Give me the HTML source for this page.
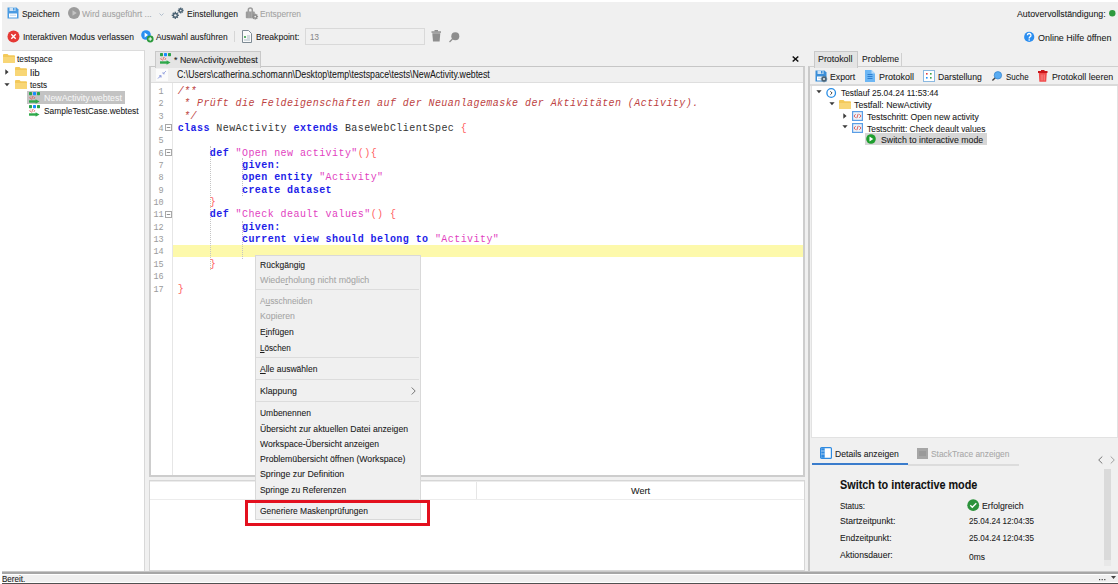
<!DOCTYPE html>
<html><head><meta charset="utf-8">
<style>
html,body{margin:0;padding:0;}
body{width:1118px;height:584px;position:relative;overflow:hidden;background:#f0f0f0;font-family:"Liberation Sans",sans-serif;}
.a{position:absolute;}
.t{position:absolute;white-space:nowrap;line-height:normal;transform-origin:0 0;-webkit-text-stroke:0.08px currentColor;font-family:"Liberation Sans",sans-serif;}
.code{position:absolute;left:177.7px;white-space:pre;font-family:"Liberation Mono",monospace;font-size:10px;letter-spacing:0.43px;line-height:12.36px;color:#333;}
.ln{position:absolute;left:143px;width:20.7px;text-align:right;white-space:pre;font-family:"Liberation Mono",monospace;font-size:8.5px;line-height:12.36px;color:#9a9a9a;}
.k{color:#1e1ee8;font-weight:bold;}
.s{color:#e23fbf;}
.c{color:#bd4242;font-style:italic;}
.p{color:#ff6262;}
svg{position:absolute;overflow:visible;}
</style></head><body>
<!-- white strips -->
<div class="a" style="left:0;top:0;width:1118px;height:2px;background:#fff"></div>
<div class="a" style="left:0;top:0;width:2px;height:584px;background:#fff"></div>

<!-- left panel -->
<div class="a" style="left:2px;top:50px;width:142px;height:520px;background:#fff;border-top:1px solid #dcdcdc;border-right:1px solid #d8d8d8"></div>
<div class="a" style="left:27px;top:91px;width:98px;height:13px;background:#c3c3c3"></div>

<!-- editor panel -->
<div class="a" style="left:149px;top:66px;width:652px;height:408px;background:#fff;border:1px solid #c6c6c6;border-left:2px solid #cdcdcd;border-right:2px solid #cdcdcd;border-bottom:2px solid #cdcdcd"></div>
<div class="a" style="left:151px;top:67px;width:652px;height:15px;background:#f0f0f0;border-bottom:1px solid #dedede"></div>
<div class="a" style="left:172px;top:83px;width:1px;height:392px;background:#e6e6e6"></div>
<!-- current line highlight -->
<div class="a" style="left:173px;top:245px;width:630px;height:12px;background:#fdf9ab"></div>
<!-- indent guides -->
<div class="a" style="left:210px;top:146px;width:0;height:124px;border-left:1px dotted #c4c4c4"></div>
<div class="a" style="left:242px;top:158px;width:0;height:38px;border-left:1px dotted #c4c4c4"></div>
<div class="a" style="left:242px;top:221px;width:0;height:38px;border-left:1px dotted #c4c4c4"></div>

<!-- editor tab -->
<div class="a" style="left:155px;top:51px;width:104px;height:16px;background:#e4e4e4;border:1px solid #c9c9c9;border-bottom:none"></div>
<!-- lower table panel -->
<div class="a" style="left:149px;top:480px;width:654px;height:89px;background:#fff;border:1px solid #d6d6d6"></div>
<div class="a" style="left:150px;top:499px;width:654px;height:1px;background:#ececec"></div>
<div class="a" style="left:476px;top:481px;width:1px;height:18px;background:#e6e6e6"></div><div class="a" style="left:150px;top:481px;width:654px;height:1px;background:#ececec"></div>

<!-- right panel -->
<div class="a" style="left:901px;top:53px;width:1px;height:13px;background:#d0d0d0"></div>
<div class="a" style="left:808px;top:66px;width:310px;height:505px;background:#f0f0f0;border-top:1px solid #cfcfcf;border-left:2px solid #c9c9c9"></div>
<div class="a" style="left:814px;top:51px;width:42px;height:16px;background:#e4e4e4;border:1px solid #c9c9c9;border-bottom:none"></div>
<div class="a" style="left:810px;top:84px;width:308px;height:2px;background:#dadada"></div>
<div class="a" style="left:811px;top:86px;width:305px;height:351px;background:#fff;border:1px solid #e2e2e2;border-top:none"></div>
<div class="a" style="left:865px;top:133px;width:122px;height:12px;background:#d6d6d6"></div>
<!-- details tabs underline -->
<div class="a" style="left:908px;top:464px;width:111px;height:2px;background:#dcdcdc"></div>
<div class="a" style="left:812px;top:463px;width:96px;height:2px;background:#3a7ccc"></div>
<!-- scrollbar -->
<div class="a" style="left:1104px;top:469px;width:7px;height:91px;background:#dadada"></div>
<div class="a" style="left:1104px;top:560px;width:7px;height:6px;background:#e8e8e8"></div>

<!-- status bar -->
<div class="a" style="left:2px;top:571px;width:1116px;height:1px;background:#c8c8c8"></div>
<div class="a" style="left:2px;top:572px;width:1116px;height:2px;background:#a6a6a6"></div>
<div class="a" style="left:2px;top:574px;width:1116px;height:1px;background:#fff"></div>
<div class="a" style="left:2px;top:582px;width:1116px;height:1px;background:#fff"></div>
<div class="a" style="left:2px;top:583px;width:1116px;height:1px;background:#505050"></div>

<!-- context menu -->
<div class="a" style="left:255px;top:255px;width:164px;height:263px;background:#f0f0f0;border:1px solid #d9d9d9"></div>
<div class="a" style="left:256px;top:289px;width:163px;height:1px;background:#dcdcdc"></div>
<div class="a" style="left:256px;top:357px;width:163px;height:1px;background:#dcdcdc"></div>
<div class="a" style="left:256px;top:379px;width:163px;height:1px;background:#dcdcdc"></div>
<div class="a" style="left:256px;top:401px;width:163px;height:1px;background:#dcdcdc"></div>
<div class="a" style="left:256px;top:499px;width:163px;height:1px;background:#dcdcdc"></div>
<!-- red highlight rectangle -->
<div class="a" style="left:245px;top:500px;width:179px;height:20px;border:3px solid #e3101e"></div>

<div class="ln" style="top:85.80px">1</div>
<div class="code" style="top:85.80px"><span class=c>/**</span></div>
<div class="ln" style="top:98.16px">2</div>
<div class="code" style="top:98.16px"><span class=c> * Prüft die Feldeigenschaften auf der Neuanlagemaske der Aktivitäten (Activity).</span></div>
<div class="ln" style="top:110.52px">3</div>
<div class="code" style="top:110.52px"><span class=c> */</span></div>
<div class="ln" style="top:122.88px">4</div>
<div class="code" style="top:122.88px"><span class=k>class</span> NewActivity <span class=k>extends</span> BaseWebClientSpec <span class=p>{</span></div>
<div class="ln" style="top:135.24px">5</div>
<div class="ln" style="top:147.60px">6</div>
<div class="code" style="top:147.60px">     <span class=k>def</span> <span class=s>"Open new activity"</span><span class=p>(){</span></div>
<div class="ln" style="top:159.96px">7</div>
<div class="code" style="top:159.96px">          <span class=k>given:</span></div>
<div class="ln" style="top:172.32px">8</div>
<div class="code" style="top:172.32px">          <span class=k>open entity</span> <span class=s>"Activity"</span></div>
<div class="ln" style="top:184.68px">9</div>
<div class="code" style="top:184.68px">          <span class=k>create dataset</span></div>
<div class="ln" style="top:197.04px">10</div>
<div class="code" style="top:197.04px">     <span class=p>}</span></div>
<div class="ln" style="top:209.40px">11</div>
<div class="code" style="top:209.40px">     <span class=k>def</span> <span class=s>"Check deault values"</span><span class=p>() {</span></div>
<div class="ln" style="top:221.76px">12</div>
<div class="code" style="top:221.76px">          <span class=k>given:</span></div>
<div class="ln" style="top:234.12px">13</div>
<div class="code" style="top:234.12px">          <span class=k>current view should belong to</span> <span class=s>"Activity"</span></div>
<div class="ln" style="top:246.48px">14</div>
<div class="ln" style="top:258.84px">15</div>
<div class="code" style="top:258.84px">     <span class=p>}</span></div>
<div class="ln" style="top:271.20px">16</div>
<div class="ln" style="top:283.56px">17</div>
<div class="code" style="top:283.56px"><span class=p>}</span></div>
<svg style="left:7px;top:7px" width="12" height="12" viewBox="0 0 12 12"><path d="M0.5 0.5h9l2 2v9h-11z" fill="#4a9be2"/><rect x="2.5" y="0.5" width="6" height="3.5" fill="#cfe3f5"/><rect x="6" y="1" width="1.5" height="2.5" fill="#4a9be2"/><rect x="2" y="6.5" width="8" height="4" fill="#ffffff"/><rect x="3" y="7.8" width="6" height="0.8" fill="#b0cde8"/></svg>
<svg style="left:68px;top:7px" width="12" height="12" viewBox="0 0 12 12"><circle cx="6" cy="6" r="6" fill="#9c9c9c"/><path d="M4.5 3.3l4.2 2.7l-4.2 2.7z" fill="#c4c4c4"/></svg>
<svg style="left:159px;top:13px" width="5" height="3" viewBox="0 0 5 3"><path d="M0.5 0.5l2 2l2-2" stroke="#a8b8c8" fill="none" stroke-width="0.9"/></svg>
<svg style="left:171px;top:6px" width="14" height="14" viewBox="0 0 14 14"><rect x="3.5999999999999996" y="5.700000000000001" width="1.4" height="7.2" fill="#4d6475" transform="rotate(0.0 4.3 9.3)"/><rect x="3.5999999999999996" y="5.700000000000001" width="1.4" height="7.2" fill="#4d6475" transform="rotate(45.0 4.3 9.3)"/><rect x="3.5999999999999996" y="5.700000000000001" width="1.4" height="7.2" fill="#4d6475" transform="rotate(90.0 4.3 9.3)"/><rect x="3.5999999999999996" y="5.700000000000001" width="1.4" height="7.2" fill="#4d6475" transform="rotate(135.0 4.3 9.3)"/><circle cx="4.3" cy="9.3" r="2.6" fill="#4d6475"/><circle cx="4.3" cy="9.3" r="1.1700000000000002" fill="#f0f0f0"/><rect x="9.0" y="1.6" width="1.4" height="5.8" fill="#4d6475" transform="rotate(0.0 9.7 4.5)"/><rect x="9.0" y="1.6" width="1.4" height="5.8" fill="#4d6475" transform="rotate(45.0 9.7 4.5)"/><rect x="9.0" y="1.6" width="1.4" height="5.8" fill="#4d6475" transform="rotate(90.0 9.7 4.5)"/><rect x="9.0" y="1.6" width="1.4" height="5.8" fill="#4d6475" transform="rotate(135.0 9.7 4.5)"/><circle cx="9.7" cy="4.5" r="1.9" fill="#4d6475"/><circle cx="9.7" cy="4.5" r="0.855" fill="#f0f0f0"/></svg>
<svg style="left:245px;top:7px" width="13" height="12" viewBox="0 0 13 12"><path d="M3.3 5v-2a2 2 0 0 1 4 0v2" stroke="#9c9c9c" stroke-width="1.5" fill="none"/><rect x="0.8" y="4.6" width="9" height="6.6" rx="0.8" fill="#9c9c9c"/><path d="M4 4.6v6.6M6.6 4.6v6.6" stroke="#b4b4b4" stroke-width="0.6"/><rect x="9.5" y="6.699999999999999" width="1.4" height="5.8" fill="#8e8e8e" transform="rotate(0.0 10.2 9.6)"/><rect x="9.5" y="6.699999999999999" width="1.4" height="5.8" fill="#8e8e8e" transform="rotate(45.0 10.2 9.6)"/><rect x="9.5" y="6.699999999999999" width="1.4" height="5.8" fill="#8e8e8e" transform="rotate(90.0 10.2 9.6)"/><rect x="9.5" y="6.699999999999999" width="1.4" height="5.8" fill="#8e8e8e" transform="rotate(135.0 10.2 9.6)"/><circle cx="10.2" cy="9.6" r="1.9" fill="#8e8e8e"/><circle cx="10.2" cy="9.6" r="0.855" fill="#f0f0f0"/></svg>
<svg style="left:7px;top:30px" width="13" height="13" viewBox="0 0 13 13"><circle cx="6.5" cy="6.5" r="6" fill="#e53935"/><path d="M4.3 4.3l4.4 4.4M8.7 4.3l-4.4 4.4" stroke="#fff" stroke-width="1.4"/></svg>
<svg style="left:141px;top:30px" width="13" height="13" viewBox="0 0 13 13"><circle cx="5" cy="5" r="4.8" fill="#2a8ef0"/><path d="M3.6 2.6l3.4 2.4l-3.4 2.4z" fill="#fff"/><circle cx="9.2" cy="9" r="3.4" fill="#2c9a3c"/><path d="M9.2 7.2v3.6M7.4 9h3.6" stroke="#fff" stroke-width="1"/></svg>
<div class="a" style="left:234px;top:31px;width:1px;height:11px;background:#d6d6d6"></div>
<svg style="left:242px;top:30px" width="10" height="13" viewBox="0 0 10 13"><path d="M0.5 0.5h6l3 3v9h-9z" fill="#fafafa" stroke="#7d8a94"/><circle cx="3" cy="7" r="1.1" fill="#3aa04a"/><path d="M5 6h3M5 8h3M2 10h6" stroke="#8aa0b0" stroke-width="0.7"/></svg>
<div class="a" style="left:305px;top:28px;width:118px;height:15px;background:#f0f0f0;border:1px solid #d9d9d9"></div>
<svg style="left:431px;top:30px" width="11" height="12" viewBox="0 0 11 12"><rect x="0.5" y="1.3" width="9.5" height="1.5" fill="#8e8e8e"/><rect x="3.5" y="0" width="3.5" height="1.5" fill="#8e8e8e"/><path d="M1.3 3.3h8l-0.7 8.2h-6.6z" fill="#8e8e8e"/></svg>
<svg style="left:449px;top:32px" width="11" height="11" viewBox="0 0 11 11"><circle cx="6.3" cy="4.3" r="4" fill="#8e8e8e"/><path d="M3.5 7l-3 3" stroke="#8e8e8e" stroke-width="1.3"/></svg>
<svg style="left:1109px;top:10px" width="7" height="7" viewBox="0 0 7 7"><circle cx="3.3" cy="3.3" r="3.2" fill="#2e9a3e"/></svg>
<svg style="left:1024px;top:31px" width="11" height="12" viewBox="0 0 11 12"><circle cx="5.2" cy="5.9" r="5.1" fill="#2b8ef0"/><path d="M3.4 4.3a1.8 1.8 0 1 1 2.6 1.6q-0.8 0.4-0.8 1.3v0.4" stroke="#fff" stroke-width="1.3" fill="none"/><rect x="4.5" y="8.3" width="1.4" height="1.3" fill="#fff"/></svg>
<svg style="left:3px;top:54px" width="12" height="9" viewBox="0 0 12 9"><path d="M0 1q0-1 1-1h3.5l1.2 1.3h5.3q1 0 1 1v5.7q0 1-1 1h-10q-1 0-1-1z" fill="#f3c95a"/><path d="M0 3h12v5q0 1-1 1h-10q-1 0-1-1z" fill="#f8d676"/></svg>
<svg style="left:5px;top:69px" width="4" height="6" viewBox="0 0 4 6"><path d="M0.3 0.3l3.3 2.7l-3.3 2.7z" fill="#3a3a3a"/></svg>
<svg style="left:15px;top:67px" width="12" height="9" viewBox="0 0 12 9"><path d="M0 1q0-1 1-1h3.5l1.2 1.3h5.3q1 0 1 1v5.7q0 1-1 1h-10q-1 0-1-1z" fill="#f3c95a"/><path d="M0 3h12v5q0 1-1 1h-10q-1 0-1-1z" fill="#f8d676"/></svg>
<svg style="left:4px;top:83px" width="6" height="4" viewBox="0 0 6 4"><path d="M0.4 0.3h5.2l-2.6 3z" fill="#3a3a3a"/></svg>
<svg style="left:15px;top:80px" width="12" height="9" viewBox="0 0 12 9"><path d="M0 1q0-1 1-1h3.5l1.2 1.3h5.3q1 0 1 1v5.7q0 1-1 1h-10q-1 0-1-1z" fill="#f3c95a"/><path d="M0 3h12v5q0 1-1 1h-10q-1 0-1-1z" fill="#f8d676"/></svg>
<svg style="left:29px;top:92px" width="12" height="12" viewBox="0 0 12 12"><rect x="0" y="0" width="3" height="3.2" rx="0.6" fill="#2ba34a"/><rect x="4" y="0" width="3" height="3.2" rx="0.6" fill="#168cff"/><rect x="8" y="0" width="3" height="3.2" rx="0.6" fill="#2ba34a"/><path d="M1.8 4.6l-1.2 1.2l1.2 1.2M4.6 4.6l1.2 1.2l-1.2 1.2M3.8 4.1l-1.2 3.6" stroke="#de5a5a" stroke-width="0.8" fill="none"/><path d="M0 9.5h7.3" stroke="#2ea84a" stroke-width="2.4"/><path d="M6.6 7.3l3.9 2.2l-3.9 2.2z" fill="#2ea84a"/></svg>
<svg style="left:29px;top:105px" width="12" height="12" viewBox="0 0 12 12"><rect x="0" y="0" width="3" height="3.2" rx="0.6" fill="#2ba34a"/><rect x="4" y="0" width="3" height="3.2" rx="0.6" fill="#168cff"/><rect x="8" y="0" width="3" height="3.2" rx="0.6" fill="#2ba34a"/><path d="M1.8 4.6l-1.2 1.2l1.2 1.2M4.6 4.6l1.2 1.2l-1.2 1.2M3.8 4.1l-1.2 3.6" stroke="#de5a5a" stroke-width="0.8" fill="none"/><path d="M0 9.5h7.3" stroke="#2ea84a" stroke-width="2.4"/><path d="M6.6 7.3l3.9 2.2l-3.9 2.2z" fill="#2ea84a"/></svg>
<svg style="left:160px;top:53px" width="12" height="12" viewBox="0 0 12 12"><rect x="0" y="0" width="3" height="3.2" rx="0.6" fill="#2ba34a"/><rect x="4" y="0" width="3" height="3.2" rx="0.6" fill="#168cff"/><rect x="8" y="0" width="3" height="3.2" rx="0.6" fill="#2ba34a"/><path d="M1.8 4.6l-1.2 1.2l1.2 1.2M4.6 4.6l1.2 1.2l-1.2 1.2M3.8 4.1l-1.2 3.6" stroke="#de5a5a" stroke-width="0.8" fill="none"/><path d="M0 9.5h7.3" stroke="#2ea84a" stroke-width="2.4"/><path d="M6.6 7.3l3.9 2.2l-3.9 2.2z" fill="#2ea84a"/></svg>
<svg style="left:156px;top:69px" width="12" height="12" viewBox="0 0 12 12"><rect x="0" y="0" width="12" height="12" fill="#fbfbfb"/><path d="M2 9.5l3-3M3.2 6.8h1.8v1.8" stroke="#7b8ad8" stroke-width="0.9" fill="none"/><path d="M10 2l-3 3M8.8 4.8h-1.8v-1.8" stroke="#9aa6e0" stroke-width="0.9" fill="none"/></svg>
<svg style="left:792px;top:56px" width="7" height="6" viewBox="0 0 7 6"><path d="M0.7 0.5l5.6 5M6.3 0.5l-5.6 5" stroke="#111" stroke-width="1.5"/></svg>
<svg style="left:165px;top:124px" width="7" height="7" viewBox="0 0 7 7"><rect x="0.5" y="0.5" width="6" height="6" fill="#fff" stroke="#a8a8a8"/><path d="M1.8 3.5h3.4" stroke="#777" stroke-width="0.8"/></svg>
<svg style="left:165px;top:149px" width="7" height="7" viewBox="0 0 7 7"><rect x="0.5" y="0.5" width="6" height="6" fill="#fff" stroke="#a8a8a8"/><path d="M1.8 3.5h3.4" stroke="#777" stroke-width="0.8"/></svg>
<svg style="left:165px;top:211px" width="7" height="7" viewBox="0 0 7 7"><rect x="0.5" y="0.5" width="6" height="6" fill="#fff" stroke="#a8a8a8"/><path d="M1.8 3.5h3.4" stroke="#777" stroke-width="0.8"/></svg>
<svg style="left:815px;top:70px" width="12" height="12" viewBox="0 0 12 12"><path d="M0.5 0.5h9l2 2v9h-11z" fill="#3a8ed8"/><rect x="2.5" y="0.5" width="6" height="3.5" fill="#cfe3f5"/><rect x="6" y="1" width="1.5" height="2.5" fill="#3a8ed8"/><rect x="2" y="6.5" width="8" height="4" fill="#ffffff"/><rect x="3" y="7.8" width="6" height="0.8" fill="#b0cde8"/></svg><svg style="left:821px;top:76px" width="6" height="6" viewBox="0 0 6 6"><rect x="2.3" y="-0.20000000000000018" width="1.4" height="6.4" fill="#4d6475" transform="rotate(0.0 3 3)"/><rect x="2.3" y="-0.20000000000000018" width="1.4" height="6.4" fill="#4d6475" transform="rotate(45.0 3 3)"/><rect x="2.3" y="-0.20000000000000018" width="1.4" height="6.4" fill="#4d6475" transform="rotate(90.0 3 3)"/><rect x="2.3" y="-0.20000000000000018" width="1.4" height="6.4" fill="#4d6475" transform="rotate(135.0 3 3)"/><circle cx="3" cy="3" r="2.2" fill="#4d6475"/><circle cx="3" cy="3" r="0.9900000000000001" fill="#f0f0f0"/></svg>
<svg style="left:865px;top:70px" width="10" height="12" viewBox="0 0 10 12"><path d="M0 0h6.5l3.5 3.5v8.5h-10z" fill="#6cb6f4"/><path d="M6.5 0v3.5h3.5z" fill="#b8dcfa"/><path d="M2.5 4.5h5M2.5 6.5h5M2.5 8.5h5" stroke="#2f7fd0" stroke-width="1"/></svg>
<svg style="left:923px;top:70px" width="12" height="12" viewBox="0 0 12 12"><rect x="0.5" y="0.5" width="11" height="11" fill="#fff" stroke="#8ab8e0"/><rect x="3" y="3" width="1.6" height="1.6" fill="#e04040"/><rect x="7" y="3" width="1.6" height="1.6" fill="#3aa04a"/><rect x="3" y="7" width="1.6" height="1.6" fill="#1e90ff"/><rect x="7" y="7" width="1.6" height="1.6" fill="#3aa04a"/></svg>
<svg style="left:991px;top:70px" width="12" height="12" viewBox="0 0 12 12"><path d="M4.8 7.2l-3.4 3.4" stroke="#444" stroke-width="1.4"/><circle cx="6.9" cy="5.3" r="3.7" fill="#5aacf2" stroke="#3a88d0" stroke-width="0.8"/></svg>
<svg style="left:1038px;top:70px" width="10" height="12" viewBox="0 0 10 12"><rect x="0" y="1" width="9.5" height="2" fill="#c8161b"/><rect x="3" y="0" width="3.5" height="1.2" fill="#c8161b"/><path d="M0.8 3h8l-0.6 8.8h-6.8z" fill="#f04a4a"/><path d="M3.2 4.5v6M4.8 4.5v6M6.4 4.5v6" stroke="#fba0a0" stroke-width="0.6"/></svg>
<svg style="left:816px;top:90px" width="6" height="4" viewBox="0 0 6 4"><path d="M0.4 0.3h5.2l-2.6 3z" fill="#3a3a3a"/></svg>
<svg style="left:826px;top:88px" width="11" height="10" viewBox="0 0 11 10"><circle cx="5.2" cy="5" r="4.3" fill="#fff" stroke="#2a8ee6" stroke-width="1.3"/><path d="M4.4 3.3l1.7 1.7l-1.7 1.7" stroke="#333" stroke-width="0.9" fill="none"/></svg>
<svg style="left:829px;top:102px" width="6" height="4" viewBox="0 0 6 4"><path d="M0.4 0.3h5.2l-2.6 3z" fill="#3a3a3a"/></svg>
<svg style="left:839px;top:100px" width="11" height="8.5" viewBox="0 0 11 8.5"><path d="M0 1q0-1 1-1h3.5l1.2 1.3h5.3q1 0 1 1v5.7q0 1-1 1h-10q-1 0-1-1z" fill="#f3c95a"/><path d="M0 3h12v5q0 1-1 1h-10q-1 0-1-1z" fill="#f8d676"/></svg>
<svg style="left:843px;top:113px" width="4" height="6" viewBox="0 0 4 6"><path d="M0.3 0.3l3.3 2.7l-3.3 2.7z" fill="#3a3a3a"/></svg>
<svg style="left:852px;top:111px" width="11" height="10" viewBox="0 0 11 10"><rect x="0.6" y="0.6" width="9.8" height="8.8" fill="#eef3f8" stroke="#5a9ee6" stroke-width="1.2"/><path d="M3.6 3.2l-1.6 1.8l1.6 1.8M7.4 3.2l1.6 1.8l-1.6 1.8M6.2 2.8l-1.4 4.4" stroke="#d43a3a" stroke-width="0.8" fill="none"/></svg>
<svg style="left:842px;top:125px" width="6" height="4" viewBox="0 0 6 4"><path d="M0.4 0.3h5.2l-2.6 3z" fill="#3a3a3a"/></svg>
<svg style="left:852px;top:123px" width="11" height="10" viewBox="0 0 11 10"><rect x="0.6" y="0.6" width="9.8" height="8.8" fill="#eef3f8" stroke="#5a9ee6" stroke-width="1.2"/><path d="M3.6 3.2l-1.6 1.8l1.6 1.8M7.4 3.2l1.6 1.8l-1.6 1.8M6.2 2.8l-1.4 4.4" stroke="#d43a3a" stroke-width="0.8" fill="none"/></svg>
<svg style="left:866px;top:134px" width="10" height="10" viewBox="0 0 10 10"><circle cx="5" cy="5" r="4.8" fill="#1e9e2e"/><path d="M3.5 2.6l3.8 2.4l-3.8 2.4z" fill="#fff"/></svg>
<svg style="left:820px;top:447px" width="12" height="12" viewBox="0 0 12 12"><rect x="0.6" y="0.6" width="10.8" height="10.8" rx="1" fill="#fff" stroke="#2f8ae0" stroke-width="1.2"/><rect x="1.2" y="1.2" width="3.5" height="9.6" fill="#2f8ae0"/><path d="M1.2 4h3.5M1.2 7h3.5" stroke="#fff" stroke-width="0.6"/></svg>
<svg style="left:917px;top:448px" width="11" height="11" viewBox="0 0 11 11"><rect x="0" y="0" width="11" height="11" fill="#a6a6a6"/><rect x="2" y="3" width="7" height="5" fill="#9a9a9a"/></svg>
<svg style="left:1098px;top:456px" width="5" height="8" viewBox="0 0 5 8"><path d="M4.3 0.5l-3.6 3.5l3.6 3.5" stroke="#666" stroke-width="0.9" fill="none"/></svg>
<svg style="left:1110px;top:456px" width="5" height="8" viewBox="0 0 5 8"><path d="M0.7 0.5l3.6 3.5l-3.6 3.5" stroke="#999" stroke-width="0.9" fill="none"/></svg>
<svg style="left:966.5px;top:499px" width="13" height="13" viewBox="0 0 13 13"><circle cx="6.2" cy="6.2" r="5.9" fill="#2c933c"/><path d="M3.3 6.3l2 2l4-4.1" stroke="#fff" stroke-width="1.3" fill="none"/></svg>
<svg style="left:411px;top:387px" width="5" height="8" viewBox="0 0 5 8"><path d="M0.7 0.5l3.5 3.5l-3.5 3.5" stroke="#666" stroke-width="0.9" fill="none"/></svg>
<svg style="left:1099px;top:578px" width="8" height="3" viewBox="0 0 8 3"><rect x="0" y="1" width="1.2" height="1.2" fill="#444"/><rect x="2.6" y="1" width="1.2" height="1.2" fill="#444"/><rect x="5.2" y="1" width="1.2" height="1.2" fill="#444"/></svg>
<svg style="left:1111px;top:576px" width="6" height="4" viewBox="0 0 6 4"><path d="M0 0h5l-2.5 3z" fill="#444"/></svg>
<div class="t" style="left:22.40px;top:7.70px;font-size:9.5px;font-weight:normal;color:#1b1b1b;transform:scaleX(0.8789);">Speichern</div>
<div class="t" style="left:82.00px;top:7.70px;font-size:9.5px;font-weight:normal;color:#a3a3a3;transform:scaleX(0.8979);">Wird ausgeführt ...</div>
<div class="t" style="left:186.80px;top:7.70px;font-size:9.5px;font-weight:normal;color:#1b1b1b;transform:scaleX(0.8940);">Einstellungen</div>
<div class="t" style="left:260.00px;top:7.70px;font-size:9.5px;font-weight:normal;color:#a3a3a3;transform:scaleX(0.8820);">Entsperren</div>
<div class="t" style="left:1017.40px;top:7.90px;font-size:9.5px;font-weight:normal;color:#1b1b1b;transform:scaleX(0.9217);">Autovervollständigung:</div>
<div class="t" style="left:22.50px;top:31.20px;font-size:9.5px;font-weight:normal;color:#1b1b1b;transform:scaleX(0.8975);">Interaktiven Modus verlassen</div>
<div class="t" style="left:155.70px;top:31.20px;font-size:9.5px;font-weight:normal;color:#1b1b1b;transform:scaleX(0.8860);">Auswahl ausführen</div>
<div class="t" style="left:256.00px;top:31.20px;font-size:9.5px;font-weight:normal;color:#1b1b1b;transform:scaleX(0.9030);">Breakpoint:</div>
<div class="t" style="left:310.40px;top:31.20px;font-size:9.5px;font-weight:normal;color:#8a8a8a;transform:scaleX(0.8319);">13</div>
<div class="t" style="left:1038.00px;top:31.60px;font-size:9.5px;font-weight:normal;color:#1b1b1b;transform:scaleX(0.9410);">Online Hilfe öffnen</div>
<div class="t" style="left:17.40px;top:53.40px;font-size:9.5px;font-weight:normal;color:#1b1b1b;transform:scaleX(0.8753);">testspace</div>
<div class="t" style="left:30.20px;top:66.50px;font-size:9.5px;font-weight:normal;color:#1b1b1b;transform:scaleX(1.0299);">lib</div>
<div class="t" style="left:30.20px;top:79.30px;font-size:9.5px;font-weight:normal;color:#1b1b1b;transform:scaleX(0.8474);">tests</div>
<div class="t" style="left:43.60px;top:92.30px;font-size:9.5px;font-weight:normal;color:#f6f6f6;transform:scaleX(0.9300);">NewActivity.webtest</div>
<div class="t" style="left:43.60px;top:105.40px;font-size:9.5px;font-weight:normal;color:#1b1b1b;transform:scaleX(0.8824);">SampleTestCase.webtest</div>
<div class="t" style="left:174.00px;top:53.50px;font-size:9.5px;font-weight:normal;color:#1b1b1b;transform:scaleX(0.9300);">* NewActivity.webtest</div>
<div class="t" style="left:177.00px;top:68.90px;font-size:10px;font-weight:normal;color:#1b1b1b;transform:scaleX(0.8771);">C:\Users\catherina.schomann\Desktop\temp\testspace\tests\NewActivity.webtest</div>
<div class="t" style="left:818.00px;top:53.40px;font-size:9.5px;font-weight:normal;color:#1b1b1b;transform:scaleX(0.9332);">Protokoll</div>
<div class="t" style="left:862.00px;top:53.40px;font-size:9.5px;font-weight:normal;color:#1b1b1b;transform:scaleX(0.9097);">Probleme</div>
<div class="t" style="left:829.60px;top:70.80px;font-size:9.5px;font-weight:normal;color:#1b1b1b;transform:scaleX(0.9138);">Export</div>
<div class="t" style="left:878.50px;top:70.80px;font-size:9.5px;font-weight:normal;color:#1b1b1b;transform:scaleX(0.9467);">Protokoll</div>
<div class="t" style="left:937.80px;top:70.80px;font-size:9.5px;font-weight:normal;color:#1b1b1b;transform:scaleX(0.9113);">Darstellung</div>
<div class="t" style="left:1005.90px;top:70.80px;font-size:9.5px;font-weight:normal;color:#1b1b1b;transform:scaleX(0.8390);">Suche</div>
<div class="t" style="left:1051.60px;top:70.80px;font-size:9.5px;font-weight:normal;color:#1b1b1b;transform:scaleX(0.9271);">Protokoll leeren</div>
<div class="t" style="left:841.00px;top:86.80px;font-size:9.5px;font-weight:normal;color:#1b1b1b;transform:scaleX(0.8762);">Testlauf 25.04.24 11:53:44</div>
<div class="t" style="left:854.40px;top:98.50px;font-size:9.5px;font-weight:normal;color:#1b1b1b;transform:scaleX(0.9245);">Testfall: NewActivity</div>
<div class="t" style="left:867.30px;top:110.60px;font-size:9.5px;font-weight:normal;color:#1b1b1b;transform:scaleX(0.9079);">Testschritt: Open new activity</div>
<div class="t" style="left:867.30px;top:122.50px;font-size:9.5px;font-weight:normal;color:#1b1b1b;transform:scaleX(0.8870);">Testschritt: Check deault values</div>
<div class="t" style="left:881.00px;top:133.70px;font-size:9.5px;font-weight:normal;color:#1b1b1b;transform:scaleX(0.9216);">Switch to interactive mode</div>
<div class="t" style="left:835.20px;top:448.20px;font-size:9.5px;font-weight:normal;color:#1b1b1b;transform:scaleX(0.9082);">Details anzeigen</div>
<div class="t" style="left:931.40px;top:448.20px;font-size:9.5px;font-weight:normal;color:#a8a8a8;transform:scaleX(0.8818);">StackTrace anzeigen</div>
<div class="t" style="left:840.20px;top:478.00px;font-size:12px;font-weight:bold;color:#111;transform:scaleX(0.9037);">Switch to interactive mode</div>
<div class="t" style="left:840.30px;top:499.50px;font-size:9.5px;font-weight:normal;color:#1b1b1b;transform:scaleX(0.8452);">Status:</div>
<div class="t" style="left:981.50px;top:499.50px;font-size:9.5px;font-weight:normal;color:#1b1b1b;transform:scaleX(0.9181);">Erfolgreich</div>
<div class="t" style="left:840.30px;top:515.00px;font-size:9.5px;font-weight:normal;color:#1b1b1b;transform:scaleX(0.9122);">Startzeitpunkt:</div>
<div class="t" style="left:968.60px;top:515.00px;font-size:9.5px;font-weight:normal;color:#1b1b1b;transform:scaleX(0.8485);">25.04.24 12:04:35</div>
<div class="t" style="left:840.30px;top:531.80px;font-size:9.5px;font-weight:normal;color:#1b1b1b;transform:scaleX(0.8962);">Endzeitpunkt:</div>
<div class="t" style="left:968.60px;top:531.80px;font-size:9.5px;font-weight:normal;color:#1b1b1b;transform:scaleX(0.8485);">25.04.24 12:04:35</div>
<div class="t" style="left:840.30px;top:548.50px;font-size:9.5px;font-weight:normal;color:#1b1b1b;transform:scaleX(0.9072);">Aktionsdauer:</div>
<div class="t" style="left:968.60px;top:550.60px;font-size:9.5px;font-weight:normal;color:#1b1b1b;transform:scaleX(0.8912);">0ms</div>
<div class="t" style="left:631.00px;top:485.30px;font-size:9.5px;font-weight:normal;color:#1b1b1b;transform:scaleX(0.9552);">Wert</div>
<div class="t" style="left:2.00px;top:572.50px;font-size:9.5px;font-weight:normal;color:#1b1b1b;transform:scaleX(0.8482);">Bereit.</div>
<div class="t" style="left:260.30px;top:258.50px;font-size:9.5px;font-weight:normal;color:#1b1b1b;transform:scaleX(0.8989);">Rückgängig</div>
<div class="t" style="left:260.30px;top:273.90px;font-size:9.5px;font-weight:normal;color:#a6a6a6;transform:scaleX(0.9366);">Wiede<span style="text-decoration:underline">r</span>holung nicht möglich</div>
<div class="t" style="left:260.30px;top:295.00px;font-size:9.5px;font-weight:normal;color:#a6a6a6;transform:scaleX(0.8762);">A<span style="text-decoration:underline">u</span>sschneiden</div>
<div class="t" style="left:260.30px;top:310.20px;font-size:9.5px;font-weight:normal;color:#a6a6a6;transform:scaleX(0.9177);">Kopieren</div>
<div class="t" style="left:260.30px;top:326.40px;font-size:9.5px;font-weight:normal;color:#1b1b1b;transform:scaleX(0.8983);">E<span style="text-decoration:underline">i</span>nfügen</div>
<div class="t" style="left:260.30px;top:341.50px;font-size:9.5px;font-weight:normal;color:#1b1b1b;transform:scaleX(0.8546);"><span style="text-decoration:underline">L</span>öschen</div>
<div class="t" style="left:260.30px;top:362.70px;font-size:9.5px;font-weight:normal;color:#1b1b1b;transform:scaleX(0.8998);"><span style="text-decoration:underline">A</span>lle auswählen</div>
<div class="t" style="left:260.30px;top:385.00px;font-size:9.5px;font-weight:normal;color:#1b1b1b;transform:scaleX(0.9189);">Klappung</div>
<div class="t" style="left:260.30px;top:407.00px;font-size:9.5px;font-weight:normal;color:#1b1b1b;transform:scaleX(0.8922);">Umbenennen</div>
<div class="t" style="left:260.30px;top:422.70px;font-size:9.5px;font-weight:normal;color:#1b1b1b;transform:scaleX(0.9099);">Übersicht zur aktuellen Datei anzeigen</div>
<div class="t" style="left:260.30px;top:437.70px;font-size:9.5px;font-weight:normal;color:#1b1b1b;transform:scaleX(0.9033);">Workspace-Übersicht anzeigen</div>
<div class="t" style="left:260.30px;top:452.80px;font-size:9.5px;font-weight:normal;color:#1b1b1b;transform:scaleX(0.9144);">Problemübersicht öffnen (Workspace)</div>
<div class="t" style="left:260.30px;top:468.20px;font-size:9.5px;font-weight:normal;color:#1b1b1b;transform:scaleX(0.9270);">Springe zur Definition</div>
<div class="t" style="left:260.30px;top:483.50px;font-size:9.5px;font-weight:normal;color:#1b1b1b;transform:scaleX(0.8861);">Springe zu Referenzen</div>
<div class="t" style="left:260.30px;top:505.20px;font-size:9.5px;font-weight:normal;color:#1b1b1b;transform:scaleX(0.8930);">Generiere Maskenprüfungen</div>
</body></html>
